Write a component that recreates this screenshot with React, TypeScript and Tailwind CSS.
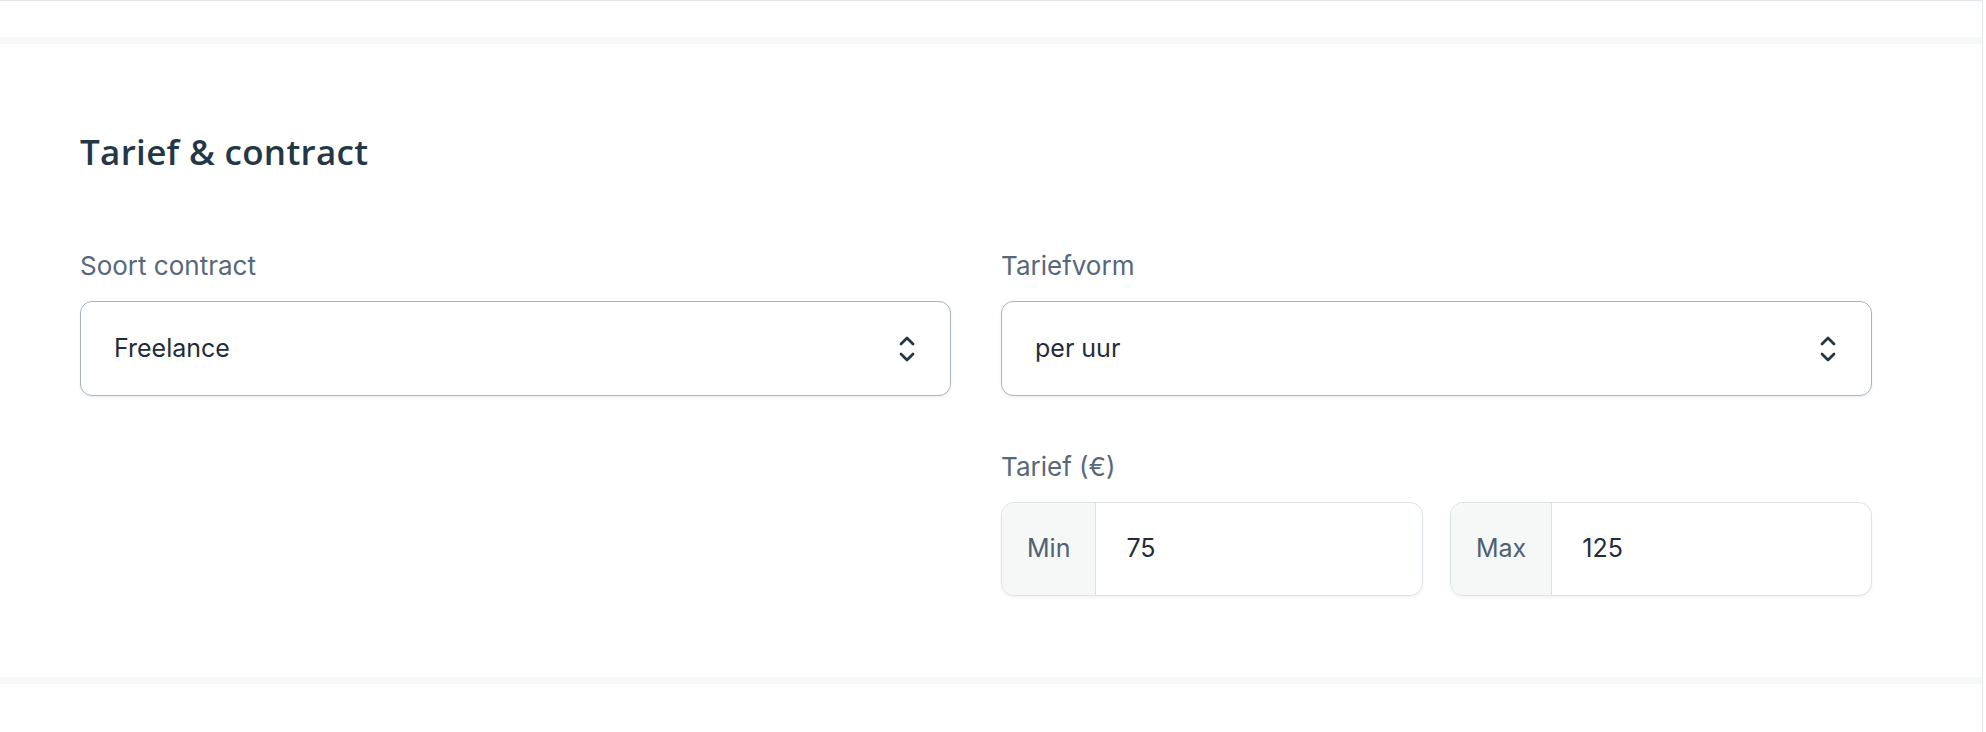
import React from 'react'

function Chevrons() {
  return (
    <svg className="w-[16px] h-[28px] text-[#263544]" viewBox="0 0 16 28" fill="none" stroke="currentColor">
      <path strokeLinecap="round" strokeLinejoin="round" strokeWidth={2.8} d="M2 9l6-6 6 6" />
      <path strokeLinecap="round" strokeLinejoin="round" strokeWidth={2.8} d="M2 19l6 6 6-6" />
    </svg>
  )
}

function SelectBox({ value }: { value: string }) {
  return (
    <div className="flex items-center justify-between h-[95px] pl-[33px] pr-[35px] rounded-[12px] border border-[#a9b4bf] bg-white shadow-[0_2px_3px_rgba(15,30,45,0.06)]">
      <span className="text-[25px] text-[#1f2d3b]">{value}</span>
      <Chevrons />
    </div>
  )
}

function AddonInput({ addon, value }: { addon: string; value: string }) {
  return (
    <div className="flex h-[94px] rounded-[13px] border border-[#dde2e6] bg-white overflow-hidden shadow-[0_2px_3px_rgba(15,30,45,0.05)]">
      <div className="flex items-center px-[25px] bg-[#f6f7f7] border-r border-[#dde2e6] text-[25px] text-[#4e6072]">
        {addon}
      </div>
      <div className="flex items-center pl-[30px] text-[25px] text-[#1f2d3b]">{value}</div>
    </div>
  )
}

function Label({ children }: { children: React.ReactNode }) {
  return <div className="text-[26px] leading-[30px] text-[#56687a] mb-[20px]">{children}</div>
}

export default function App() {
  return (
    <div
      className="w-[1983px] h-[732px] bg-white border-t border-r border-[#e3e6e9] overflow-hidden"
      style={{ fontFamily: 'Inter, "Noto Sans", sans-serif' }}
    >
      <div className="h-[36px]" />
      <div className="h-[7px] bg-[#f6f7f7]" />
      <section className="bg-white pl-[80px] pt-[87px] pb-[81px]">
        <h2
          className="text-[35px] leading-[42px] font-semibold text-[#243746] tracking-[0.3px]"
          style={{ fontFamily: '"Open Sans", sans-serif' }}
        >
          Tarief &amp; contract
        </h2>
        <div className="w-[1792px] grid grid-cols-2 gap-x-[50px] mt-[78px]">
          <div>
            <Label>Soort contract</Label>
            <SelectBox value="Freelance" />
          </div>
          <div>
            <Label>Tariefvorm</Label>
            <SelectBox value="per uur" />
          </div>
          <div />
          <div className="mt-[56px]">
            <Label>Tarief (€)</Label>
            <div className="grid grid-cols-2 gap-x-[27px]">
              <AddonInput addon="Min" value="75" />
              <AddonInput addon="Max" value="125" />
            </div>
          </div>
        </div>
      </section>
      <div className="h-[7px] bg-[#f6f7f7]" />
    </div>
  )
}
